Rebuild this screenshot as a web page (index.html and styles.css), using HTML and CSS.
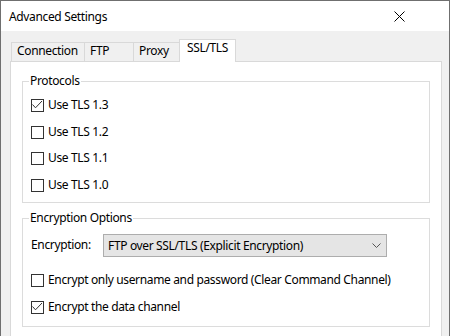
FILE: index.html
```html
<!DOCTYPE html>
<html lang="en">
<head>
  <meta charset="UTF-8">
  <meta name="viewport" content="width=device-width, initial-scale=1.0">
  <title>Advanced Settings</title>
  <link rel="stylesheet" href="styles.css">
</head>
<body>
  <div class="window">
    <div class="titlebar">
      <span class="title">Advanced Settings</span>
      <svg class="close" width="11" height="11" viewBox="0 0 11 11">
        <path d="M0.5 0.5 L10.5 10.5 M10.5 0.5 L0.5 10.5" stroke="#000" stroke-width="1" fill="none"/>
      </svg>
    </div>

    <div class="client">
      <!-- Tab strip -->
      <div class="tabs">
        <div class="tab tab-connection">Connection</div>
        <div class="tab tab-ftp">FTP</div>
        <div class="tab tab-proxy">Proxy</div>
        <div class="tab tab-ssl active">SSL/TLS</div>
      </div>

      <div class="panel">
        <fieldset class="group group-protocols">
          <legend>Protocols</legend>
          <div class="group-body">
            <label class="check">
              <span class="box"><svg width="13" height="13" viewBox="0 0 13 13"><polyline points="1.5,5.5 4.5,8.8 11,2" fill="none" stroke="#333" stroke-width="1"/></svg></span>
              Use TLS 1.3
            </label>
            <label class="check"><span class="box"></span>Use TLS 1.2</label>
            <label class="check"><span class="box"></span>Use TLS 1.1</label>
            <label class="check"><span class="box"></span>Use TLS 1.0</label>
          </div>
        </fieldset>

        <fieldset class="group group-encryption">
          <legend>Encryption Options</legend>
          <div class="group-body">
            <div class="select-row">
              <span class="select-label">Encryption:</span>
              <div class="select">
                <span>FTP over SSL/TLS (Explicit Encryption)</span>
                <svg class="chevron" width="9" height="5" viewBox="0 0 9 5"><polyline points="0.5,0.5 4.5,4.5 8.5,0.5" fill="none" stroke="#555" stroke-width="1"/></svg>
              </div>
            </div>
            <label class="check check-first"><span class="box"></span>Encrypt only username and password (Clear Command Channel)</label>
            <label class="check">
              <span class="box"><svg width="13" height="13" viewBox="0 0 13 13"><polyline points="1.5,5.5 4.5,8.8 11,2" fill="none" stroke="#333" stroke-width="1"/></svg></span>
              Encrypt the data channel
            </label>
          </div>
        </fieldset>
      </div>
    </div>
  </div>
</body>
</html>
```

FILE: styles.css
```css
body {
  margin: 0;
  font-family: "Noto Sans", sans-serif;
  font-size: 12px;
  letter-spacing: -0.35px;
  color: #000;
  background-color: #ffffff;
}

.window {
  width: 450px;
  height: 336px;
  box-sizing: border-box;
  border: 1px solid #6f6f6f;
  border-bottom: none;
  display: flex;
  flex-direction: column;
  overflow: hidden;
}

.titlebar {
  height: 30px;
  flex-shrink: 0;
  display: flex;
  align-items: center;
  padding-left: 8px;
  background-color: #ffffff;
}

.title {
  line-height: 16px;
  margin-top: 1px;
}

.close {
  margin-left: auto;
  margin-right: 44px;
  margin-top: 1px;
}

.client {
  flex: 1;
  display: flex;
  flex-direction: column;
  background-color: #f0f0f0;
  padding: 8px 7px 0 9px;
}

/* Tabs */
.tabs {
  display: flex;
  align-items: flex-end;
  height: 22px;
  padding-left: 1px;
}

.tab {
  height: 19px;
  box-sizing: border-box;
  border-top: 1px solid #d9d9d9;
  border-left: 1px solid #d9d9d9;
  padding-left: 5px;
  line-height: 16px;
  white-space: nowrap;
}

.tab-connection { width: 73px; }
.tab-ftp { width: 49px; }
.tab-proxy { width: 46px; }

.tab.active {
  width: 57px;
  height: 23px;
  margin-bottom: -1px;
  padding-left: 7px;
  border-right: 1px solid #d9d9d9;
  background-color: #ffffff;
  position: relative;
  z-index: 1;
}

.panel {
  flex: 1;
  border: 1px solid #d9d9d9;
  border-bottom: none;
  background-color: #ffffff;
}

/* Group boxes */
.group {
  margin: 11px 11px 0 11px;
  padding: 0 0 0 8px;
  border: 1px solid #dcdcdc;
  min-width: 0;
}

.group-encryption {
  margin-top: 7px;
}

.group legend {
  margin-left: -2px;
  padding: 0 1px 1px 1px;
  line-height: 16px;
}

.group-body {
  display: flex;
  flex-direction: column;
}

.group-protocols .group-body {
  padding-top: 7px;
  padding-bottom: 10px;
  gap: 11.67px;
}

.group-encryption .group-body {
  padding-top: 7px;
  padding-bottom: 12px;
  gap: 12px;
}

.check {
  display: flex;
  align-items: flex-start;
  height: 15px;
  line-height: 15px;
  white-space: nowrap;
}

.box {
  width: 13px;
  height: 13px;
  box-sizing: border-box;
  border: 1px solid #333333;
  margin-top: 2px;
  margin-right: 4px;
  flex-shrink: 0;
  position: relative;
}

.box svg {
  position: absolute;
  left: -1px;
  top: -1px;
}

.check-first {
  margin-top: 3px;
}

/* Dropdown */
.select-row {
  display: flex;
  align-items: center;
}

.select-label {
  width: 72px;
  line-height: 16px;
}

.select {
  width: 284px;
  height: 23px;
  box-sizing: border-box;
  border: 1px solid #adadad;
  background-color: #e5e5e5;
  display: flex;
  align-items: center;
  padding-left: 4px;
  line-height: 21px;
}

.chevron {
  margin-left: auto;
  margin-right: 5px;
}
```
